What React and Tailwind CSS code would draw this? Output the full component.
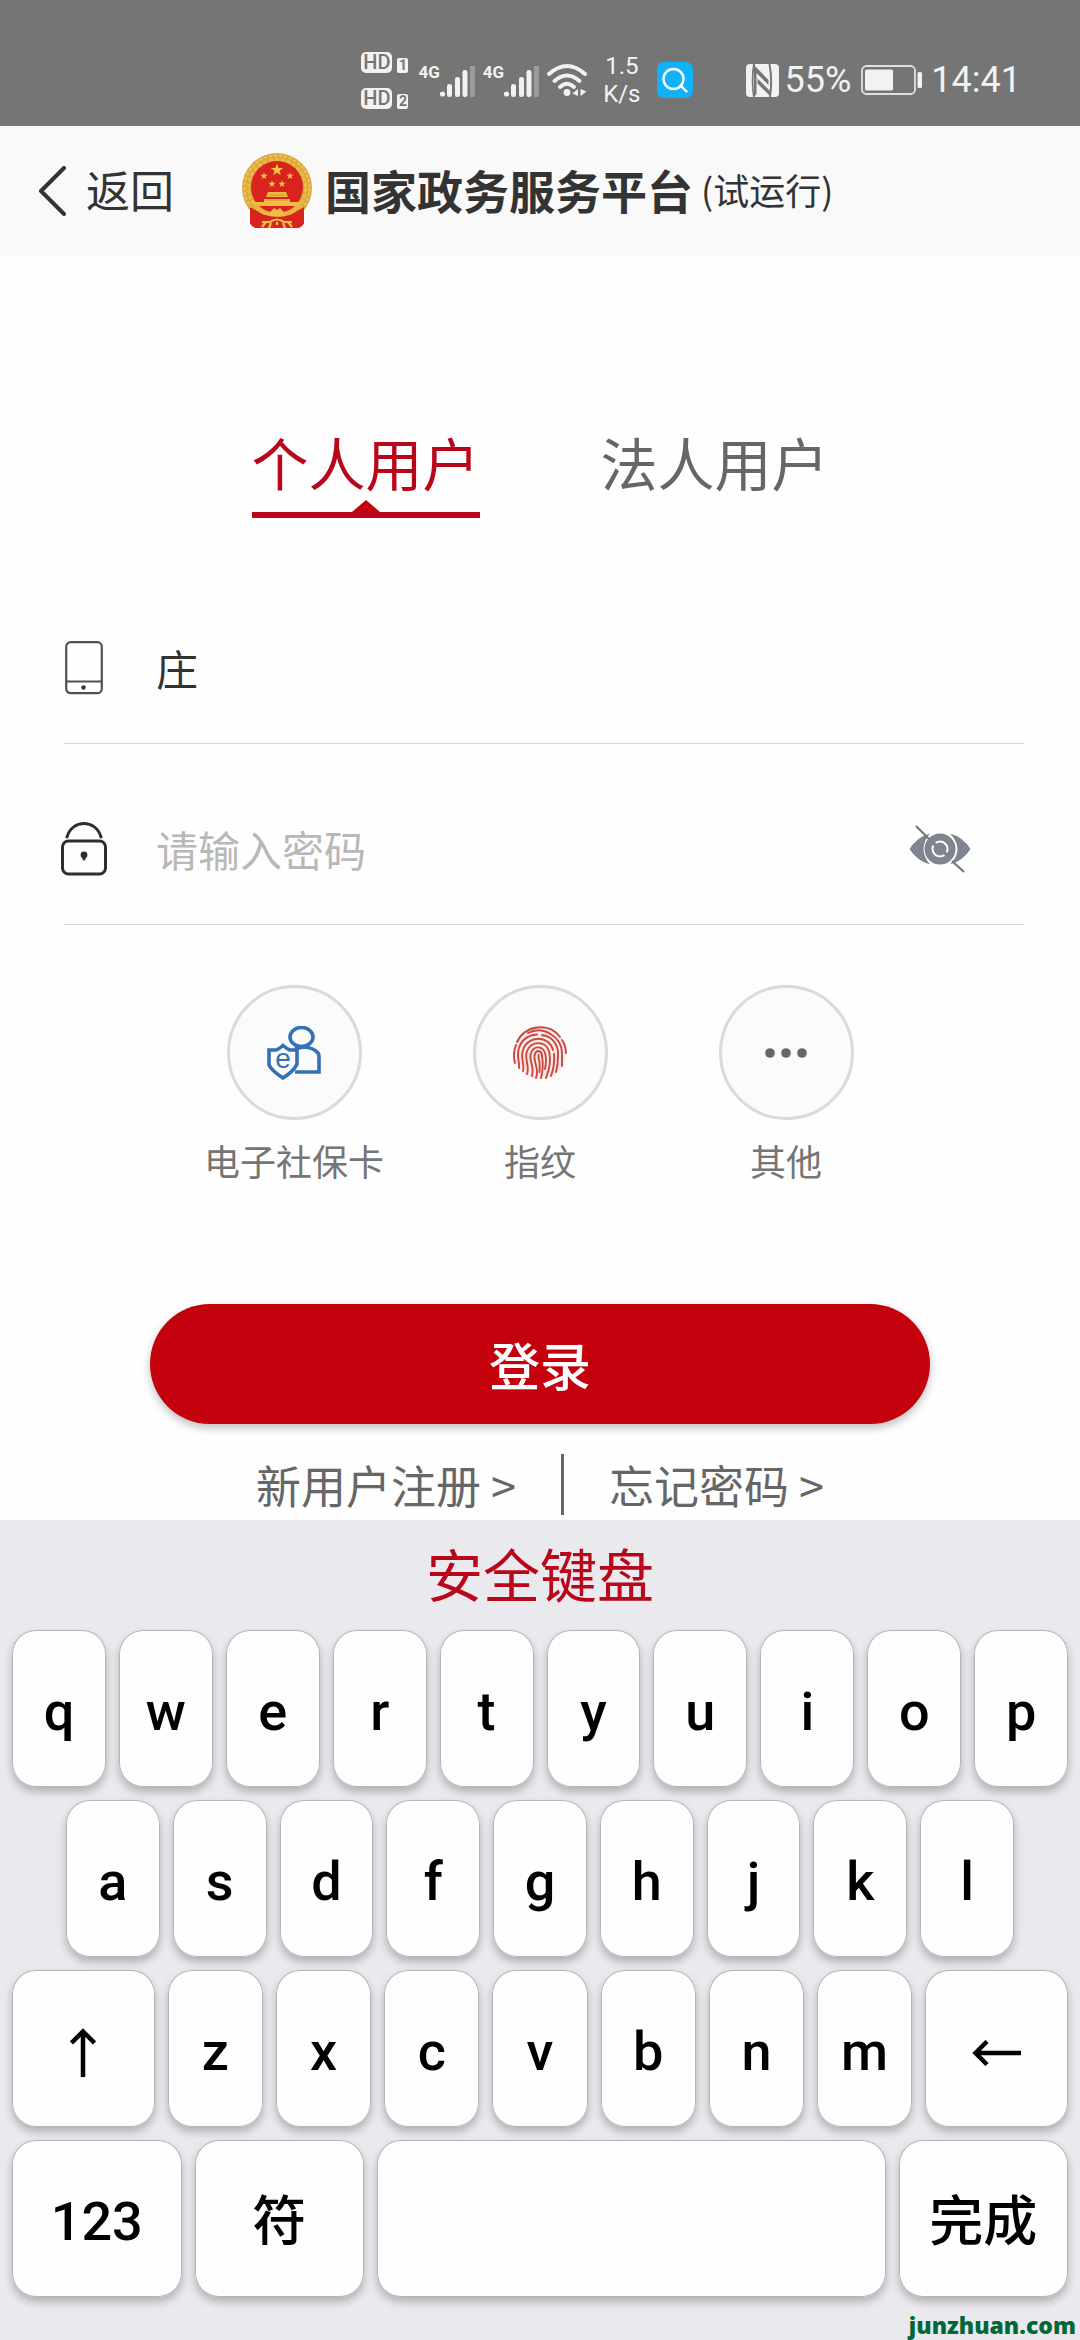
import React, { useState } from "react";

const KEY =
  "flex h-[157px] min-w-0 items-center justify-center rounded-[24px] bg-[#fefefe] text-[54px] font-medium leading-[64px] text-black shadow-[inset_0_0_0_1px_#b4b4ba,0_5px_8px_rgba(0,0,0,0.24)]";

function VolteBadge({ sim }) {
  return (
    <div className="flex items-end gap-[5px]">
      <span className="flex h-[21px] w-[31px] items-center justify-center rounded-[5px] bg-[#f2f2f2] text-[20px] font-medium leading-[21px] text-[#757575]">
        HD
      </span>
      <span className="flex h-[15px] w-[11px] items-center justify-center rounded-[2px] bg-[#f2f2f2] text-[14px] font-bold leading-[15px] text-[#757575]">
        {sim}
      </span>
    </div>
  );
}

function Signal() {
  return (
    <div className="flex h-[34px] items-start">
      <span className="text-[17px] font-bold leading-[18px]">4G</span>
      <svg className="mt-[3px] h-[31px] w-[35px]" viewBox="0 0 35 31" fill="#f2f2f2" aria-hidden="true">
        <circle cx="2.5" cy="28" r="2.6" />
        <rect x="7" y="18" width="5" height="13" rx="2.3" />
        <rect x="15" y="11" width="5" height="20" rx="2.3" />
        <rect x="22.5" y="4" width="5" height="27" rx="2.3" />
        <rect x="30" y="0" width="5" height="31" rx="1" fill="#9b9b9b" />
      </svg>
    </div>
  );
}

function Wifi() {
  return (
    <svg className="h-[34px] w-[40px]" viewBox="0 0 40 34" fill="none" stroke="#f2f2f2" strokeWidth="4" strokeLinecap="round" aria-hidden="true">
      <path d="M2 11 Q20 -5 38 11" />
      <path d="M7.500 18 Q20 7 32.500 18" />
      <path d="M13 24 Q20 17.500 27 24" />
      <circle cx="20" cy="29.500" r="3.400" fill="#f2f2f2" stroke="none" />
      <path d="M31 26 V33 L25.500 30.500 Z M33.500 33 V26 L39.500 28.500 Z" fill="#f2f2f2" stroke="none" />
    </svg>
  );
}

function SearchBadge() {
  return (
    <svg className="h-[36px] w-[36px]" viewBox="0 0 36 36" fill="none" aria-hidden="true">
      <rect width="36" height="36" rx="7" fill="#0fb2fb" />
      <circle cx="16.500" cy="17" r="10" stroke="#fff" strokeWidth="2.400" />
      <path d="M23.500 23.500 L29.500 29.500" stroke="#fff" strokeWidth="2.400" strokeLinecap="round" />
    </svg>
  );
}

function Nfc() {
  return (
    <svg className="h-[33px] w-[33px]" viewBox="0 0 33 33" aria-hidden="true">
      <rect width="33" height="33" rx="4" fill="#f2f2f2" />
      <path d="M7 0 H9 Q6 16 8.500 33 H7 Q4.500 16 7 0 Z M22.500 0 H24.500 Q27.500 16 25 33 H23 Q25.500 16 22.500 0 Z" fill="#757575" />
      <path d="M8 1 L22.500 16 V21 L10.500 9 V30 L8 33 Z" fill="#757575" />
      <path d="M11.500 14.500 L24 27 V32 L11.500 19.500 Z" fill="#757575" />
    </svg>
  );
}

function Battery() {
  return (
    <svg className="h-[30px] w-[62px]" viewBox="0 0 62 30" aria-hidden="true">
      <rect x="1" y="1" width="53" height="28" rx="4.500" fill="none" stroke="#e0e0e0" strokeWidth="1.800" />
      <rect x="4" y="4.500" width="28" height="21" rx="1.500" fill="#f2f2f2" />
      <rect x="56.500" y="7" width="4.500" height="16" rx="1.500" fill="#f2f2f2" />
    </svg>
  );
}

function Star({ x, y, r }) {
  const points = Array.from({ length: 10 }, (_, i) => {
    const radius = i % 2 ? r * 0.4 : r;
    const angle = (Math.PI / 5) * i - Math.PI / 2;
    return `${x + radius * Math.cos(angle)},${y + radius * Math.sin(angle)}`;
  }).join(" ");
  return <polygon points={points} fill="#f6c945" />;
}

function Emblem() {
  return (
    <svg className="h-[76px] w-[70px] shrink-0" viewBox="0 0 70 76" aria-label="国徽" role="img">
      <path d="M8 52 L62 52 L62 70 Q60 74 56 75 H14 Q10 74 8 70 Z" fill="#d7241f" />
      <circle cx="35" cy="35" r="35" fill="#dca83a" />
      <circle cx="35" cy="35" r="32.500" fill="none" stroke="#ecc562" strokeWidth="2" strokeDasharray="3 2" />
      <circle cx="35" cy="35" r="28.500" fill="none" stroke="#eebc45" strokeWidth="3" strokeDasharray="4 2" />
      <path d="M8 54 L22 62 L35 60 L48 62 L62 54 V70 Q60 74 56 75 H14 Q10 74 8 70 Z" fill="#d7241f" />
      <circle cx="35" cy="34" r="26" fill="#d9231f" />
      <Star x={35} y={17} r={6.5} />
      <Star x={22} y={23} r={3.8} />
      <Star x={48} y={23} r={3.8} />
      <Star x={30} y={31} r={3.8} />
      <Star x={40} y={31} r={3.8} />
      <path d="M26 39 H44 L46 44 H24 Z M22 46 H48 V49 H59 L57 53 H13 L11 49 H22 Z" fill="#eebc45" />
      <path d="M27 42 H43 M24 47 H46" stroke="#c98a24" strokeWidth="0.800" />
      <path d="M13 53 Q22 62 35 62 Q48 62 57 53" fill="none" stroke="#e9b440" strokeWidth="4" />
      <path d="M29 58 L32 55 L35 57 L38 55 L41 58 L44 61 L38 63 H32 L26 61 Z" fill="#eebc45" />
      <path d="M20 69 H28 Q35 64 42 69 H50 M20 74 L24 69 M50 74 L46 69 M29 70 L27 75 M41 70 L43 75 M35 69 V72" fill="none" stroke="#efc04c" strokeWidth="2.200" />
    </svg>
  );
}

function PhoneIcon() {
  return (
    <svg className="h-[54px] w-[38px] shrink-0" viewBox="0 0 38 54" fill="none" stroke="#505050" strokeWidth="2.200" aria-hidden="true">
      <rect x="1.200" y="1.200" width="35.600" height="51" rx="4.500" />
      <path d="M1 40.500 H37" />
      <circle cx="18.500" cy="46.500" r="2.200" fill="#333" stroke="none" />
    </svg>
  );
}

function LockIcon() {
  return (
    <svg className="h-[54px] w-[46px] shrink-0" viewBox="0 0 46 54" fill="none" stroke="#2e2e2e" strokeWidth="3" strokeLinecap="round" aria-hidden="true">
      <path d="M6 15 C11 -3 35 -3 40 15" />
      <rect x="1.500" y="19" width="43" height="33" rx="6" />
      <circle cx="23" cy="33" r="3.400" fill="#2e2e2e" stroke="none" />
      <path d="M23 34 V37" />
    </svg>
  );
}

function EyeOffIcon() {
  return (
    <svg className="h-[48px] w-[62px]" viewBox="0 0 62 48" fill="none" aria-hidden="true">
      <path d="M0.500 24 Q8 12 21 8.500 Q8 24 21 39.500 Q8 36 0.500 24 Z" fill="#7f858e" />
      <path d="M61.500 24 Q54 12 41 8.500 Q56 24 41 39.500 Q54 36 61.500 24 Z" fill="#7f858e" />
      <circle cx="31" cy="24" r="15.500" fill="#7f858e" />
      <circle cx="31" cy="24" r="7.500" stroke="#fff" strokeWidth="2" strokeDasharray="20 3.560" strokeDashoffset="-7" />
      <path d="M7 1 L20 14 M43 36 L55 47" stroke="#74777d" strokeWidth="2.200" />
    </svg>
  );
}

function SocialCardIcon() {
  return (
    <svg className="h-[54px] w-[54px]" viewBox="0 0 54 54" fill="none" stroke="#3470b4" strokeWidth="3.600" aria-hidden="true">
      <ellipse cx="34.500" cy="11" rx="11.500" ry="9.500" />
      <path d="M28 21 Q32 23 35 21 Q46 21 51 27 Q52 28 52 31 V46 H28" />
      <path d="M2 24 H9 Q12 23 16 19.500 Q20 23 23 24 H30 V38 Q27 45 16 52 Q5 45 2 39 Z" fill="#fbfbfb" />
      <text x="16" y="42" textAnchor="middle" fontFamily="Liberation Sans" fontSize="28" fill="#3470b4" stroke="none">e</text>
    </svg>
  );
}

function FingerprintIcon() {
  return (
    <svg className="h-[54px] w-[54px]" viewBox="0 0 54 54" fill="none" stroke="#c8483f" strokeWidth="1.900" strokeLinecap="round" aria-hidden="true">
      <circle cx="27" cy="27" r="26" fill="#fdeae8" stroke="none" />
      <path d="M4 16 C12 -1 36 -4 47 11 M49 14 Q53 20 53 27" />
      <path d="M2 37 C0 30 1 24 3 19 M15 7 C30 -1 50 11 49 29 V40" />
      <path d="M6 42 C7 36 3 30 6 22 C9 13 16 9 24 8.500 M29 9 C39 10 46 19 45 30 Q45 39 43 46" />
      <path d="M10 45 C12 38 7 32 10 24 C15 9 36 9 40 24 M41 28 Q42 39 38 50" />
      <path d="M14 48 C17 40 11 33 14 25 C18 15 32 14 36 25 Q39 37 33 52" />
      <path d="M19 50 C22 40 15 34 18 27 C21 19 30 20 32 27 Q34 33 32 43" />
      <path d="M23 52 C27 42 19 34 22 28 C24 23 29 25 29 30 Q31 41 28 52" />
      <path d="M25.500 29 Q25 32 26.500 36 Q27 41 26.500 46" />
    </svg>
  );
}

function MoreIcon() {
  return (
    <svg className="h-[10px] w-[42px]" viewBox="0 0 42 10" fill="#666" aria-hidden="true">
      <circle cx="5" cy="5" r="4.800" />
      <circle cx="21" cy="5" r="4.800" />
      <circle cx="37" cy="5" r="4.800" />
    </svg>
  );
}

function StatusBar() {
  return (
    <div className="flex h-[126px] items-center justify-end bg-[#757575] pr-[59px] pt-[34px] font-[Roboto,sans-serif] text-[#f2f2f2]">
      <div className="flex flex-col gap-[15px]">
        <VolteBadge sim="1" />
        <VolteBadge sim="2" />
      </div>
      <div className="ml-2.5 flex items-center gap-2">
        <Signal />
        <Signal />
        <Wifi />
      </div>
      <div className="ml-4 text-center text-[24px] leading-[28px]">
        <div>1.5</div>
        <div>K/s</div>
      </div>
      <div className="ml-4">
        <SearchBadge />
      </div>
      <div className="ml-[53px] flex items-center gap-1.5">
        <Nfc />
        <span className="text-[36px] leading-[40px]">55%</span>
      </div>
      <div className="ml-2.5">
        <Battery />
      </div>
      <span className="ml-2 text-[36px] leading-[40px]">14:41</span>
    </div>
  );
}

function Tab({ label, active, onSelect }) {
  return (
    <button
      type="button"
      role="tab"
      aria-selected={active}
      onClick={onSelect}
      className={active ? "flex flex-col items-center text-[#b9061a]" : "flex flex-col items-center text-[#666]"}
    >
      <span className="pb-1 text-[57px] leading-[70px]">{label}</span>
      {active && (
        <>
          <svg className="h-3 w-7" viewBox="0 0 28 12" fill="#c3020e" aria-hidden="true">
            <path d="M14 0 L28 12 H0 Z" />
          </svg>
          <span className="h-1.5 w-full bg-[#b9061a]" />
        </>
      )}
    </button>
  );
}

function LoginWay({ label, children }) {
  return (
    <button type="button" className="flex flex-1 flex-col items-center gap-[18px] text-[#757575]">
      <span className="flex size-[135px] items-center justify-center rounded-full border-[3px] border-[#dadada] bg-[#fbfbfb]">
        {children}
      </span>
      <span className="whitespace-nowrap text-[36px] leading-[44px]">{label}</span>
    </button>
  );
}

function Letters({ letters }) {
  return letters.split("").map((letter) => (
    <button key={letter} type="button" className={`${KEY} flex-[2] pt-1.5`}>
      {letter}
    </button>
  ));
}

function Keyboard() {
  return (
    <section aria-label="安全键盘" className="relative flex-1 bg-[#e9e9ee] px-3 pb-[43px] pt-5">
      <h2 className="text-center text-[57px] leading-[64px] text-[#b9061a]">安全键盘</h2>
      <div className="mt-[26px] flex flex-col gap-[13px] font-[Roboto,'Noto_Sans_CJK_SC',sans-serif]">
        <div className="flex gap-[13px]">
          <Letters letters="qwertyuiop" />
        </div>
        <div className="flex gap-[13px] px-[54px]">
          <Letters letters="asdfghjkl" />
        </div>
        <div className="flex gap-[13px]">
          <button type="button" aria-label="大写" className={`${KEY} flex-[3] pt-2`}>
            <svg className="h-[49px] w-[26px]" viewBox="0 0 26 49" fill="none" stroke="#000" strokeWidth="4.500" aria-hidden="true">
              <path d="M13 49 V3 M1.500 15 L13 3.500 L24.500 15" />
            </svg>
          </button>
          <Letters letters="zxcvbnm" />
          <button type="button" aria-label="退格" className={`${KEY} flex-[3] pt-2`}>
            <svg className="h-[26px] w-[49px]" viewBox="0 0 49 26" fill="none" stroke="#000" strokeWidth="4.500" aria-hidden="true">
              <path d="M49 13 H3 M15 1.500 L3.500 13 L15 24.500" />
            </svg>
          </button>
        </div>
        <div className="flex gap-[13px]">
          <button type="button" className={`${KEY} flex-1 pt-1.5`}>123</button>
          <button type="button" className={`${KEY} flex-1 pt-2`}>符</button>
          <button type="button" aria-label="空格" className={`${KEY} flex-[3]`} />
          <button type="button" className={`${KEY} flex-1 pt-2`}>完成</button>
        </div>
      </div>
      <span className="absolute bottom-0 right-1 font-['Open_Sans'] text-[23px] font-extrabold leading-[30px] text-[#006837]">
        junzhuan.com
      </span>
    </section>
  );
}

export default function App() {
  const [tab, setTab] = useState("personal");
  const [account, setAccount] = useState("庄");
  const [password, setPassword] = useState("");

  return (
    <div className="flex min-h-screen flex-col bg-[#fefefe] font-['Noto_Sans_CJK_SC',sans-serif]">
      <StatusBar />
      <header className="flex h-[130px] items-center bg-[#f9f9f9] pl-[38px] text-[#333]">
        <button type="button" className="flex items-center gap-5">
          <svg className="h-[50px] w-[28px]" viewBox="0 0 28 50" fill="none" stroke="#333" strokeWidth="4" strokeLinecap="round" strokeLinejoin="round" aria-hidden="true">
            <path d="M26 2 L3 25 L26 48" />
          </svg>
          <span className="pb-1 text-[44px] leading-[56px]">返回</span>
        </button>
        <div className="ml-[68px] flex items-center">
          <Emblem />
          <h1 className="ml-[13px] pb-1 text-[46px] font-bold leading-[56px]">国家政务服务平台</h1>
          <span className="ml-2 pb-1 text-[36px] leading-[44px]">(试运行)</span>
        </div>
      </header>

      <main className="pb-[5px] pt-[170px]">
        <div role="tablist" className="flex h-[92px] items-start justify-center gap-[121px]">
          <Tab label="个人用户" active={tab === "personal"} onSelect={() => setTab("personal")} />
          <Tab label="法人用户" active={tab === "legal"} onSelect={() => setTab("legal")} />
        </div>

        <form onSubmit={(event) => event.preventDefault()}>
          <div className="ml-16 mr-14 mt-[45px]">
            <div className="flex h-[181px] items-center gap-[52px] border-b border-[#d6d6d6] pt-[30px]">
              <label htmlFor="account" aria-label="账号" className="flex w-10 shrink-0 justify-center">
                <PhoneIcon />
              </label>
              <input
                id="account"
                value={account}
                onChange={(event) => setAccount(event.target.value)}
                className="min-w-0 flex-1 bg-transparent text-[42px] leading-[56px] text-[#333] outline-none"
              />
            </div>
            <div className="flex h-[181px] items-center gap-[52px] border-b border-[#d6d6d6] pr-[53px] pt-[30px]">
              <label htmlFor="password" aria-label="密码" className="flex w-10 shrink-0 justify-center">
                <LockIcon />
              </label>
              <input
                id="password"
                type="password"
                placeholder="请输入密码"
                value={password}
                onChange={(event) => setPassword(event.target.value)}
                className="min-w-0 flex-1 bg-transparent text-[42px] leading-[56px] text-[#333] outline-none placeholder:text-[#b8b8b8]"
              />
              <button type="button" aria-label="显示密码">
                <EyeOffIcon />
              </button>
            </div>
          </div>

          <div className="mx-[171px] mt-[60px] flex">
            <LoginWay label="电子社保卡"><SocialCardIcon /></LoginWay>
            <LoginWay label="指纹"><FingerprintIcon /></LoginWay>
            <LoginWay label="其他"><MoreIcon /></LoginWay>
          </div>

          <div className="mt-[122px] px-[150px]">
            <button
              type="submit"
              className="h-[120px] w-full rounded-full bg-[#c3020e] text-[51px] font-medium leading-[64px] text-white shadow-[0_4px_8px_rgba(0,0,0,0.25)]"
            >
              登录
            </button>
          </div>
        </form>

        <nav className="mt-[30px] flex h-[61px] items-center justify-center gap-[45px] text-[45px] leading-[60px] text-[#666]">
          <a href="#register">新用户注册 &gt;</a>
          <span className="h-full w-[3px] bg-[#666]" />
          <a href="#forgot">忘记密码 &gt;</a>
        </nav>
      </main>

      <Keyboard />
    </div>
  );
}
